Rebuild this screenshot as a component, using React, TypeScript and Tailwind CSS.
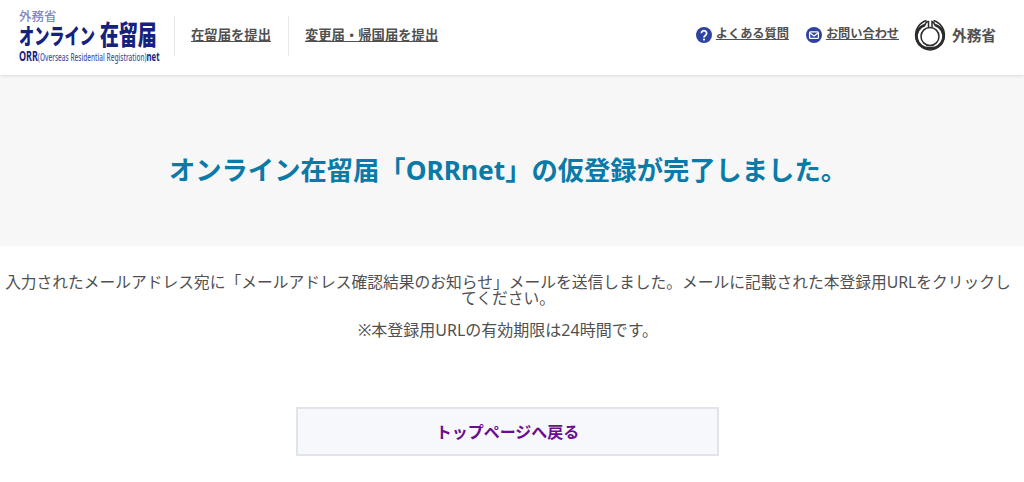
const jp = "font-['Noto_Sans','Noto_Sans_CJK_JP',sans-serif]";

function HelpIcon() {
  return (
    <svg viewBox="0 0 16 16" className="h-[16px] w-[16px] shrink-0">
      <circle cx="8" cy="8" r="8" fill="#2f429f" />
      <path d="M5.4 6.2a2.6 2.6 0 1 1 4 2.2c-.9.6-1.4 1-1.4 2" fill="none" stroke="#fff" strokeWidth="1.8" />
      <circle cx="8" cy="12.6" r="1.1" fill="#fff" />
    </svg>
  );
}

function MailIcon() {
  return (
    <svg viewBox="0 0 16 16" className="h-[16px] w-[16px] shrink-0">
      <circle cx="8" cy="8" r="8" fill="#2f429f" />
      <rect x="3.6" y="4.8" width="8.8" height="6.6" rx="1" fill="none" stroke="#fff" strokeWidth="1.3" />
      <path d="M4 6l4 3 4-3" fill="none" stroke="#fff" strokeWidth="1.3" />
    </svg>
  );
}

function Emblem() {
  return (
    <svg viewBox="0 0 32 32" className="h-[32px] w-[32px] shrink-0">
      {/* outer ring, open at the top, heavier on the sides */}
      <path d="M12.5 1.6A15 15 0 0 0 16 31 15 15 0 0 0 19.5 1.6" fill="none" stroke="#2b2b2b" strokeWidth="1.6" />
      <path d="M11 6A11.8 11.8 0 0 0 16 29 11.8 11.8 0 0 0 21 6" fill="none" stroke="#2b2b2b" strokeWidth="2.6" />
      <circle cx="16" cy="17.5" r="9" fill="none" stroke="#2b2b2b" strokeWidth="1.5" />
      <path d="M11 6.5C11.5 3.5 13 2.5 14.5 2.5L14.5 8.5" fill="none" stroke="#2b2b2b" strokeWidth="1.5" />
      <path d="M21 6.5C20.5 4 19.5 3 18 2.5L18 8.5" fill="none" stroke="#2b2b2b" strokeWidth="1.5" />
    </svg>
  );
}

export default function App() {
  return (
    <div className={`${jp} h-[482px] overflow-hidden bg-white text-[#505050]`}>
      <header className="relative z-10 flex h-[75px] items-center justify-between bg-white pb-[4px] pl-[19px] pr-[28px] shadow-[0_1px_3px_rgba(0,0,0,0.12)]">
        <div className="flex items-center">
          <div className="flex h-[56px] w-[141px] flex-col pt-[2px] text-[#16217f]">
            <span className="text-[12.5px] leading-[13px] font-medium text-[#7f88c4]">外務省</span>
            <div className="-mt-[2px] flex h-[29px] items-center whitespace-nowrap">
              <div className="w-[81px]">
                <span className="inline-block origin-left scale-x-[0.69] text-[22px] leading-[29px] font-black">オンライン</span>
              </div>
              <div className="w-[57px]">
                <span className="inline-block origin-left scale-x-[0.7] text-[27px] leading-[29px] font-black">在留届</span>
              </div>
            </div>
            <span className="-mt-[1px] origin-left scale-x-[0.64] text-[10.2px] leading-[14px] font-medium whitespace-nowrap text-[#4a55a5]">
              <b className="text-[14px] text-[#16217f]">ORR</b>(Overseas Residential Registration)<b className="text-[12px] text-[#16217f]">net</b>
            </span>
          </div>
          <div className="ml-[14px] flex h-[40px] items-center border-l border-[#e8e8e8] pl-[16px] pr-[17px]">
            <a className="text-[13.33px] font-bold underline">在留届を提出</a>
          </div>
          <div className="flex h-[40px] items-center border-l border-[#e8e8e8] px-[16px]">
            <a className="text-[13.33px] font-bold underline">変更届・帰国届を提出</a>
          </div>
        </div>
        <div className="flex items-center pb-[2px]">
          <HelpIcon />
          <a className="ml-[4px] text-[12.2px] font-bold underline">よくある質問</a>
          <div className="w-[17px]" />
          <MailIcon />
          <a className="ml-[4px] text-[12.2px] font-bold underline">お問い合わせ</a>
          <div className="ml-[15px]"><Emblem /></div>
          <span className="ml-[6px] text-[14.67px] font-bold">外務省</span>
        </div>
      </header>
      <div className="h-[171px] bg-[#f7f7f7]">
        <section className="flex h-full w-[1016px] items-center justify-center pt-[20px]">
          <h1 className="text-[26.3px] font-bold text-[#0a7aa8]">オンライン在留届「ORRnet」の仮登録が完了しました。</h1>
        </section>
      </div>
      <div className="w-[1016px]">
        <p className="mt-[28px] text-center text-[15.75px] leading-[16px]">入力されたメールアドレス宛に「メールアドレス確認結果のお知らせ」メールを送信しました。メールに記載された本登録用URLをクリックしてください。</p>
        <p className="mt-[16px] text-center text-[16px] leading-[16px]">※本登録用URLの有効期限は24時間です。</p>
        <div className="mt-[69px] flex justify-center pr-[1px]">
          <a className="flex h-[49px] w-[423px] items-center justify-center border-2 border-[#e1e4ea] bg-[#f7f8fb] text-[16px] font-bold text-[#6a0d8f]">トップページへ戻る</a>
        </div>
      </div>
    </div>
  );
}
